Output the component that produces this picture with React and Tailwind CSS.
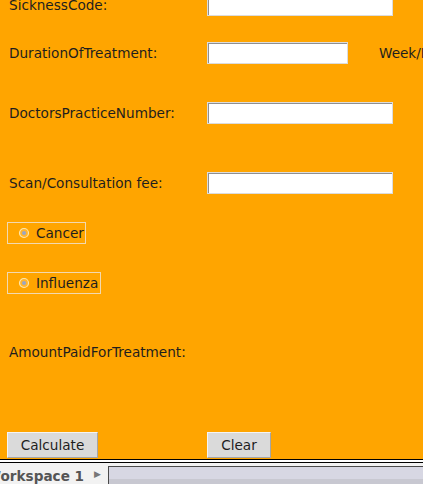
import React from 'react';

function Field({ width }) {
  return (
    <div className={`h-[22px] ${width} shrink-0 bg-white border border-[#dcdcdc] shadow-[inset_1px_1px_0_#8f8f8f]`} />
  );
}

function Radio({ label, width }) {
  return (
    <div className={`h-[22px] ${width} flex items-center border border-[#f2d9b0]`}>
      <svg width="12" height="12" viewBox="0 0 12 12" className="ml-[10px] mr-[6px] shrink-0">
        <circle cx="6" cy="6" r="4.5" fill="#ffb52e" stroke="#ffe6a8" strokeWidth="1.2" />
        <circle cx="6" cy="6" r="2" fill="#9aa6c4" />
      </svg>
      <span className="whitespace-nowrap">{label}</span>
    </div>
  );
}

function Button({ label, width }) {
  return (
    <div className={`h-[26px] ${width} flex items-center justify-center bg-[#dadada] border-t border-l border-[#f4f4f4] border-r border-r-[#a5a5a5] border-b border-b-[#a5a5a5]`}>
      {label}
    </div>
  );
}

export default function App() {
  return (
    <div className="w-[423px] h-[484px] overflow-hidden flex flex-col font-['DejaVu_Sans',sans-serif] text-[13.6px] text-[#1e1e1e]">
      <div className="h-[459px] bg-[#ffa500] flex flex-col shrink-0 overflow-hidden">
        {/* text fields */}
        <div className="flex items-center mt-[-6px] pl-[9px]">
          <span className="w-[198px] shrink-0">SicknessCode:</span>
          <Field width="w-[186px]" />
        </div>
        <div className="flex items-center mt-[26px] pl-[9px]">
          <span className="w-[198px] shrink-0">DurationOfTreatment:</span>
          <Field width="w-[141px]" />
          <span className="ml-[31px] shrink-0 whitespace-nowrap">Week/Days</span>
        </div>
        <div className="flex items-center mt-[38px] pl-[9px]">
          <span className="w-[198px] shrink-0">DoctorsPracticeNumber:</span>
          <Field width="w-[186px]" />
        </div>
        <div className="flex items-center mt-[48px] pl-[9px]">
          <span className="w-[198px] shrink-0">Scan/Consultation fee:</span>
          <Field width="w-[186px]" />
        </div>

        {/* options */}
        <div className="mt-[28px] pl-[7px]">
          <Radio label="Cancer" width="w-[79px]" />
        </div>
        <div className="mt-[28px] pl-[7px]">
          <Radio label="Influenza" width="w-[94px]" />
        </div>

        <div className="h-[22px] flex items-center mt-[47px] pl-[9px]">
          AmountPaidForTreatment:
        </div>

        {/* actions */}
        <div className="flex mt-[69px] pl-[7px]">
          <Button label="Calculate" width="w-[91px]" />
          <div className="ml-[109px]">
            <Button label="Clear" width="w-[64px]" />
          </div>
        </div>
      </div>

      {/* desktop taskbar */}
      <div className="flex-1 flex flex-col border-t border-black">
        <div className="h-[2px] bg-white" />
        <div className="flex-1 flex border-t border-black bg-[#f2f2f2]">
          <div className="w-[108px] shrink-0 flex items-start pt-[3px] overflow-hidden">
            <span className="ml-[-14px] font-bold text-[#555] whitespace-nowrap">Workspace 1</span>
            <span className="ml-[10px] mt-[2px] text-[9px] text-[#777]">▶</span>
          </div>
          <div className="flex-1 flex pt-[3px]">
            <div className="flex-1 flex flex-col border-l border-t border-[#4a4a4a] bg-[#d7d7e3]">
              <div className="flex-1" />
              <div className="h-[7px] bg-[#c8c8d1]" />
            </div>
          </div>
        </div>
      </div>
    </div>
  );
}
